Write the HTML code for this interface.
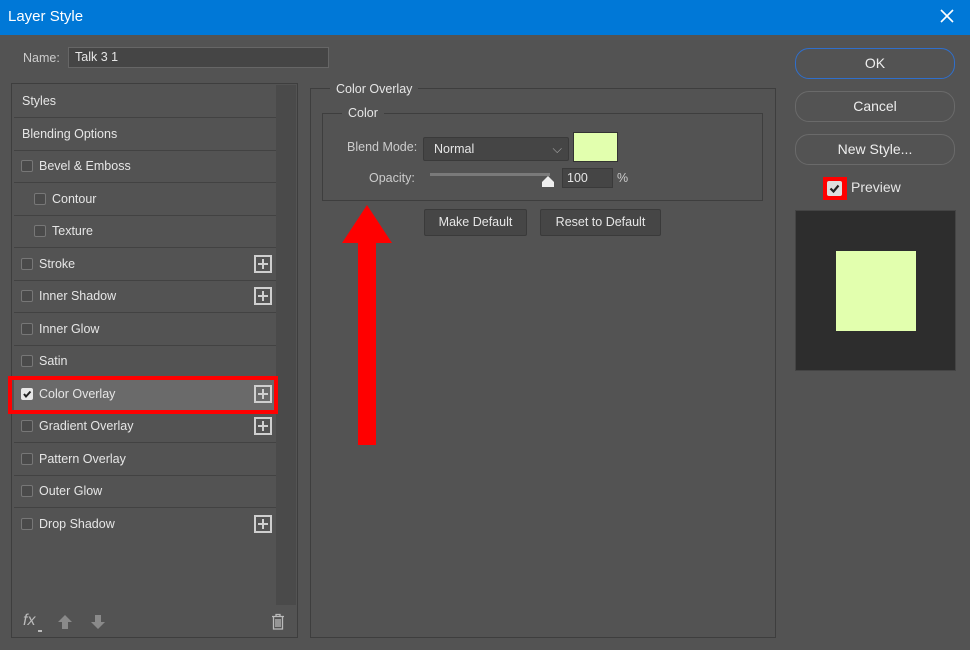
<!DOCTYPE html>
<html><head><style>
*{box-sizing:border-box;margin:0;padding:0}
body{width:970px;height:650px;background:#535353;font-family:"Liberation Sans",sans-serif;font-size:12.5px;color:#e6e6e6;position:relative;overflow:hidden}
.a{position:absolute}
.title{left:0;top:0;width:970px;height:35px;background:#0078d7;color:#fff;font-size:15px;line-height:34px;padding-left:8px}
.row{position:absolute;left:14px;width:262px;height:33px;border-bottom:1px solid #424242;line-height:32px}
.cb{position:absolute;width:12px;height:12px;border:1px solid #777;border-radius:2px;background:#4a4a4a;top:10px}
.plus{position:absolute;left:240px;top:7px;width:18px;height:18px;border:2px solid #cfcfcf;}
.plus:before{content:"";position:absolute;left:2px;top:6px;width:10px;height:2px;background:#cfcfcf}
.plus:after{content:"";position:absolute;left:6px;top:2px;width:2px;height:10px;background:#cfcfcf}
.btn{position:absolute;border:1px solid #6a6a6a;border-radius:14px;text-align:center;font-size:14px;height:31px;line-height:29px;color:#eee}
.sbtn{position:absolute;background:#464646;border:1px solid #3a3a3a;border-radius:2px;text-align:center;height:27px;line-height:25px}
</style></head><body>
<div class="a title">Layer Style</div>
<svg class="a" style="left:940px;top:9px" width="14" height="14"><path d="M1 1L13 13M13 1L1 13" stroke="#fff" stroke-width="1.6"/></svg>
<div class="a" style="left:23px;top:51px;color:#ccc">Name:</div>
<div class="a" style="left:68px;top:47px;width:261px;height:21px;background:#454545;border:1px solid #666;padding-left:6px;line-height:19px">Talk 3 1</div>

<div class="a" style="left:11px;top:83px;width:287px;height:555px;border:1px solid #3e3e3e"></div>
<div class="a" style="left:276px;top:85px;width:20px;height:520px;background:#4a4a4a"></div>

<div class="row" style="top:85px;padding-left:8px">Styles</div>
<div class="row" style="top:118px;padding-left:8px">Blending Options</div>
<div class="row" style="top:150px"><div class="cb" style="left:7px"></div><span style="position:absolute;left:25px">Bevel &amp; Emboss</span></div>
<div class="row" style="top:183px"><div class="cb" style="left:20px"></div><span style="position:absolute;left:38px">Contour</span></div>
<div class="row" style="top:215px"><div class="cb" style="left:20px"></div><span style="position:absolute;left:38px">Texture</span></div>
<div class="row" style="top:248px"><div class="cb" style="left:7px"></div><span style="position:absolute;left:25px">Stroke</span><div class="plus"></div></div>
<div class="row" style="top:280px"><div class="cb" style="left:7px"></div><span style="position:absolute;left:25px">Inner Shadow</span><div class="plus"></div></div>
<div class="row" style="top:313px"><div class="cb" style="left:7px"></div><span style="position:absolute;left:25px">Inner Glow</span></div>
<div class="row" style="top:345px"><div class="cb" style="left:7px"></div><span style="position:absolute;left:25px">Satin</span></div>
<div class="row" style="top:378px;background:#6a6a6a"><div class="cb" style="left:7px;background:#e8e8e8;border-color:#e8e8e8"><svg width="10" height="10" style="position:absolute;left:0;top:0"><path d="M2 5L4 7.5L8.5 2.5" stroke="#222" stroke-width="2" fill="none"/></svg></div><span style="position:absolute;left:25px">Color Overlay</span><div class="plus"></div></div>
<div class="row" style="top:410px"><div class="cb" style="left:7px"></div><span style="position:absolute;left:25px">Gradient Overlay</span><div class="plus"></div></div>
<div class="row" style="top:443px"><div class="cb" style="left:7px"></div><span style="position:absolute;left:25px">Pattern Overlay</span></div>
<div class="row" style="top:475px"><div class="cb" style="left:7px"></div><span style="position:absolute;left:25px">Outer Glow</span></div>
<div class="row" style="top:508px;border:none"><div class="cb" style="left:7px"></div><span style="position:absolute;left:25px">Drop Shadow</span><div class="plus"></div></div>
<div class="a" style="left:8px;top:376px;width:270px;height:38px;border:4px solid #f00"></div>

<div class="a" style="left:23px;top:612px;font-style:italic;font-size:16px;color:#bbb">fx</div>
<div class="a" style="left:38px;top:630px;width:4px;height:2px;background:#bbb"></div>
<svg class="a" style="left:57px;top:614px" width="16" height="16"><path d="M8 1 L15 8 H11 V15 H5 V8 H1 Z" fill="#8a8a8a"/></svg>
<svg class="a" style="left:90px;top:614px" width="16" height="16"><path d="M8 15 L15 8 H11 V1 H5 V8 H1 Z" fill="#8a8a8a"/></svg>
<svg class="a" style="left:270px;top:613px" width="16" height="18"><path d="M2 3.5H14M6 3.5V1.5H10V3.5M3.5 4V16H12.5V4M6 6V14M8 6V14M10 6V14" stroke="#bbb" stroke-width="1.3" fill="none"/></svg>

<div class="a" style="left:310px;top:88px;width:466px;height:550px;border:1px solid #3e3e3e"></div>
<div class="a" style="left:330px;top:81px;background:#535353;padding:0 6px;line-height:16px">Color Overlay</div>
<div class="a" style="left:322px;top:113px;width:441px;height:88px;border:1px solid #3e3e3e"></div>
<div class="a" style="left:342px;top:105px;background:#535353;padding:0 6px;line-height:16px">Color</div>
<div class="a" style="left:347px;top:140px;color:#ccc">Blend Mode:</div>
<div class="a" style="left:423px;top:137px;width:146px;height:24px;background:#454545;border:1px solid #3a3a3a;border-radius:2px;padding-left:10px;line-height:22px">Normal<span style="position:absolute;right:6px;top:0;color:#aaa">⌵</span></div>
<div class="a" style="left:573px;top:132px;width:45px;height:30px;background:#e2ffae;border:1px solid #333"></div>
<div class="a" style="left:369px;top:171px;color:#ccc">Opacity:</div>
<div class="a" style="left:430px;top:173px;width:120px;height:3px;background:#7a7a7a"></div>
<svg class="a" style="left:541px;top:175px" width="14" height="13"><path d="M7 1 L13 7 V12 H1 V7 Z" fill="#eee"/></svg>
<div class="a" style="left:562px;top:168px;width:51px;height:20px;background:#454545;border:1px solid #3a3a3a;padding-left:4px;line-height:18px">100</div>
<div class="a" style="left:617px;top:171px;color:#ccc">%</div>
<div class="sbtn" style="left:424px;top:209px;width:103px">Make Default</div>
<div class="sbtn" style="left:540px;top:209px;width:121px">Reset to Default</div>

<svg class="a" style="left:340px;top:204px" width="54" height="244"><path d="M27 1 L52 39 H36 V241 H18 V39 H2 Z" fill="#f00"/></svg>

<div class="btn" style="left:795px;top:48px;width:160px;border:1px solid #2f6fcc">OK</div>
<div class="btn" style="left:795px;top:91px;width:160px">Cancel</div>
<div class="btn" style="left:795px;top:134px;width:160px">New Style...</div>
<div class="a" style="left:823px;top:177px;width:24px;height:23px;background:#f00"></div>
<div class="a" style="left:827px;top:181px;width:15px;height:15px;background:#ddd;border-radius:2px"><svg width="15" height="15"><path d="M3.5 7.5L6.5 10.5L11.5 4.5" stroke="#222" stroke-width="2.2" fill="none"/></svg></div>
<div class="a" style="left:851px;top:179px;font-size:14px">Preview</div>
<div class="a" style="left:795px;top:210px;width:161px;height:161px;background:#2d2d2d;border:1px solid #444"></div>
<div class="a" style="left:836px;top:251px;width:80px;height:80px;background:#e2ffae"></div>
</body></html>
